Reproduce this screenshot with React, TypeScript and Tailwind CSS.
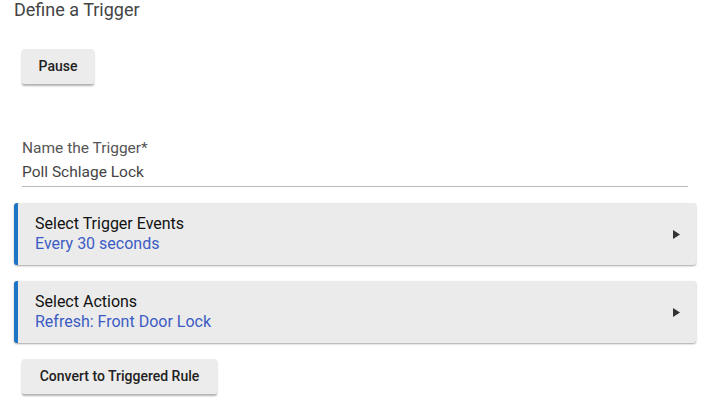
import React from "react";

function Card({ title, value }: { title: string; value: string }) {
  return (
    <div className="flex h-[62px] items-center rounded-[3px] border-l-[4px] border-[#1f74c4] bg-[#ebebeb] pl-[17px] pr-[16px] shadow-[0_1px_2px_rgba(0,0,0,0.35)]">
      <div className="flex flex-1 flex-col">
        <div className="text-[16px] leading-[20px] text-[#111]">{title}</div>
        <div className="text-[16px] leading-[20px] text-[#3b5cc4]">{value}</div>
      </div>
      <svg width="7" height="9" viewBox="0 0 7 9">
        <path d="M0 0 L7 4.5 L0 9 Z" fill="#333" />
      </svg>
    </div>
  );
}

export default function App() {
  return (
    <div className="w-[706px] h-[416px] bg-white font-['Roboto',sans-serif] overflow-hidden">
      <div className="pl-[14px] pr-[10px]">
        <div className="text-[18px] leading-[20px] text-[#444]">Define a Trigger</div>
        <div className="pl-[8px] pt-[29px]">
          <button className="h-[35px] w-[72px] rounded-[2px] bg-[#ececec] text-[14px] font-medium text-[#222] shadow-[0_2px_2px_rgba(0,0,0,0.3)]">
            Pause
          </button>
        </div>
        <div className="ml-[8px] mr-[8px] mt-[52px] border-b border-[#bbb] pb-[2px]">
          <div className="text-[15.5px] leading-[24px] text-[#555]">Name the Trigger*</div>
          <div className="text-[15.5px] leading-[24px] text-[#444]">Poll Schlage Lock</div>
        </div>
        <div className="mt-[16px] flex flex-col gap-[16px]">
          <Card title="Select Trigger Events" value="Every 30 seconds" />
          <Card title="Select Actions" value="Refresh: Front Door Lock" />
        </div>
        <div className="pl-[8px] pt-[16px]">
          <button className="h-[35px] w-[195px] rounded-[2px] bg-[#ececec] text-[14px] font-medium text-[#222] shadow-[0_2px_2px_rgba(0,0,0,0.3)]">
            Convert to Triggered Rule
          </button>
        </div>
      </div>
    </div>
  );
}
